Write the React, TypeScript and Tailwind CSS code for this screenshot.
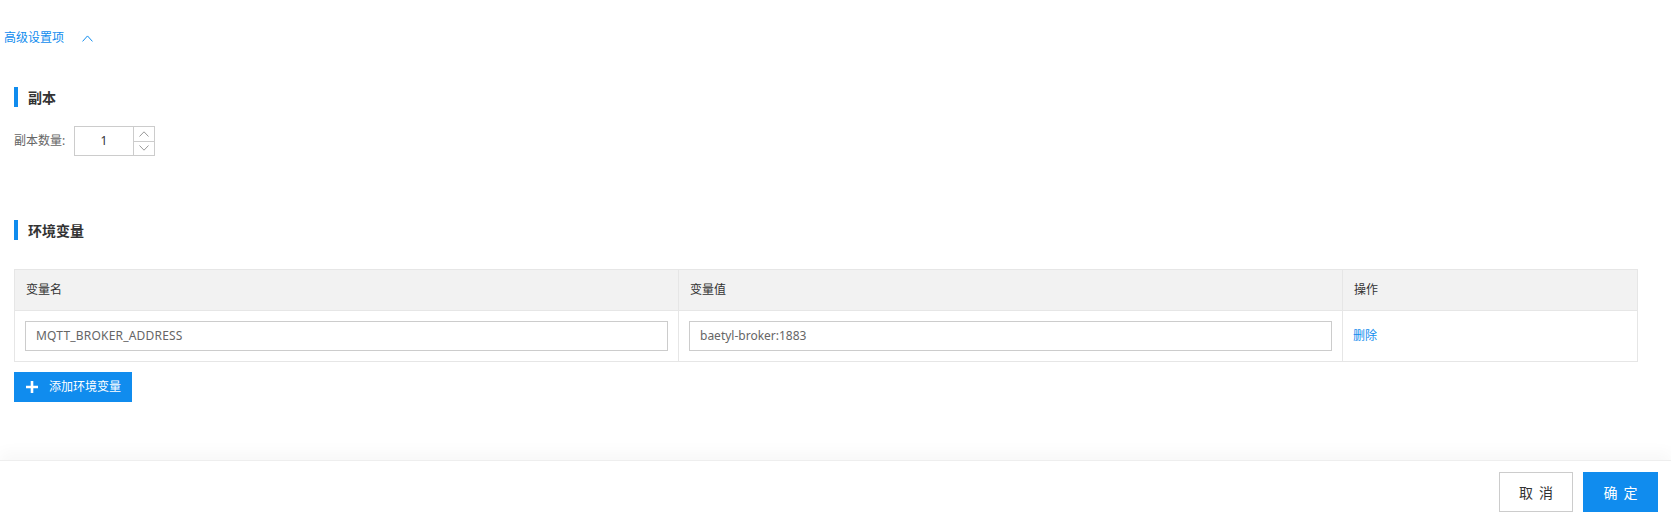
import React from 'react';

const font = { fontFamily: '"Noto Sans", "Noto Sans CJK SC", sans-serif' };

const SectionTitle: React.FC<{ title: string }> = ({ title }) => (
  <div className="flex items-center h-[20px]">
    <span className="w-[4px] h-[20px] bg-[#108cee]" />
    <span className="ml-[10px] text-[14px] font-bold text-[#333]">{title}</span>
  </div>
);

const Chevron: React.FC<{ up?: boolean; className?: string }> = ({ up, className }) => (
  <svg viewBox="0 0 10 6" className={className} fill="none" preserveAspectRatio="none">
    <polyline
      points={up ? '0.5,5.5 5,0.8 9.5,5.5' : '0.5,0.5 5,5.2 9.5,0.5'}
      stroke="currentColor"
      strokeWidth="1"
      vectorEffect="non-scaling-stroke"
    />
  </svg>
);

export default function App() {
  return (
    <div className="w-[1671px] h-[517px] bg-white flex flex-col overflow-hidden" style={font}>
      <div className="flex-1 pl-[14px] pr-[33px]">
        {/* advanced toggle */}
        <div className="mt-[28px] -ml-[10px] flex items-center h-[20px] text-[12px] text-[#108cee]">
          <span>高级设置项</span>
          <Chevron up className="ml-[18px] w-[11px] h-[7px]" />
        </div>

        {/* replicas */}
        <div className="mt-[39px]">
          <SectionTitle title="副本" />
        </div>
        <div className="mt-[19px] flex items-center">
          <span className="text-[12px] text-[#666] w-[60px]">副本数量:</span>
          <div className="flex h-[30px] w-[81px] border border-[#ccc]">
            <div className="flex-1 flex items-center justify-center text-[12px] text-[#333]">1</div>
            <div className="w-[21px] border-l border-[#ccc] flex flex-col text-[#999]">
              <div className="flex-1 flex items-center justify-center border-b border-[#ccc]">
                <Chevron up className="w-[10px] h-[6px]" />
              </div>
              <div className="flex-1 flex items-center justify-center">
                <Chevron className="w-[10px] h-[6px]" />
              </div>
            </div>
          </div>
        </div>

        {/* env vars */}
        <div className="mt-[64px]">
          <SectionTitle title="环境变量" />
        </div>
        <table className="mt-[29px] w-full border-collapse border border-[#e6e6e6] text-[12px]">
          <thead>
            <tr className="bg-[#f2f2f2] h-[41px] text-left text-[#333]">
              <th className="font-normal pl-[11px] w-[664px] border border-[#e6e6e6]">变量名</th>
              <th className="font-normal pl-[11px] w-[664px] border border-[#e6e6e6]">变量值</th>
              <th className="font-normal pl-[11px] border border-[#e6e6e6]">操作</th>
            </tr>
          </thead>
          <tbody>
            <tr className="h-[51px]">
              <td className="px-[10px] border border-[#e6e6e6]">
                <div className="h-[30px] border border-[#ccc] flex items-center px-[10px] text-[#666] tracking-[0.2px]">MQTT_BROKER_ADDRESS</div>
              </td>
              <td className="px-[10px] border border-[#e6e6e6]">
                <div className="h-[30px] border border-[#ccc] flex items-center px-[10px] text-[#666]">baetyl-broker:1883</div>
              </td>
              <td className="px-[10px] border border-[#e6e6e6] text-[#108cee]">删除</td>
            </tr>
          </tbody>
        </table>
        <button className="mt-[10px] h-[30px] w-[118px] bg-[#108cee] text-white text-[12px] flex items-center pl-[11px]">
          <svg width="14" height="14" viewBox="0 0 14 14">
            <path d="M7 1v12M1 7h12" stroke="white" strokeWidth="2.6" />
          </svg>
          <span className="ml-[10px]">添加环境变量</span>
        </button>
      </div>

      {/* footer */}
      <div className="h-[57px] shrink-0 border-t border-[#eee] shadow-[0_-8px_14px_rgba(0,0,0,0.03)] flex items-start justify-end pt-[11px] pr-[13px] gap-[10px]">
        <button className="h-[40px] w-[74px] border border-[#ccc] bg-white text-[14px] text-[#333] tracking-[6px] pl-[6px]">取消</button>
        <button className="h-[40px] w-[75px] bg-[#108cee] text-[14px] text-white tracking-[6px] pl-[6px]">确定</button>
      </div>
    </div>
  );
}
